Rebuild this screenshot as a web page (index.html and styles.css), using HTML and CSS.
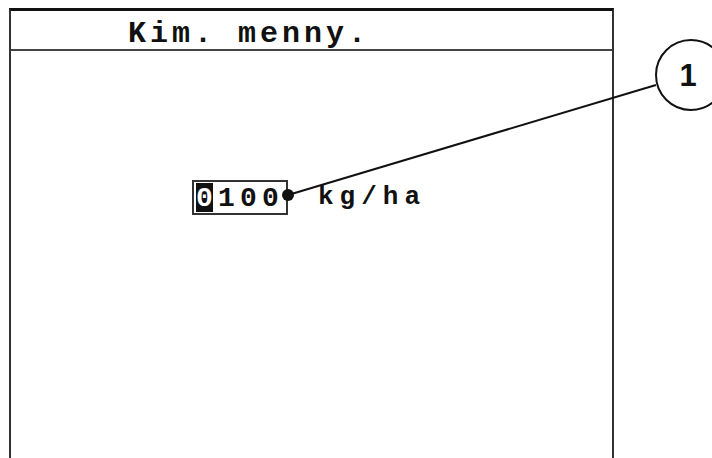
FILE: index.html
```html
<!DOCTYPE html>
<html lang="en">
<head>
  <meta charset="UTF-8">
  <meta name="viewport" content="width=device-width, initial-scale=1.0">
  <title>Kim. menny.</title>
  <link rel="stylesheet" href="styles.css">
</head>
<body>
  <div class="screen">
    <div class="title">Kim. menny.</div>
    <div class="content">
      <div class="entry">
        <div class="field">
          <span class="digit cursor">0</span>
          <span class="digit">1</span>
          <span class="digit">0</span>
          <span class="digit">0</span>
        </div>
        <span class="unit">kg/ha</span>
      </div>
    </div>
  </div>

  <!-- callout 1 -->
  <svg class="callout" width="712" height="458" viewBox="0 0 712 458">
    <line x1="288" y1="195" x2="656" y2="85" stroke="#111" stroke-width="2"/>
    <circle cx="288" cy="195" r="6" fill="#111"/>
    <circle cx="691" cy="75" r="35" fill="#fff" stroke="#111" stroke-width="2"/>
    <text x="688" y="86" text-anchor="middle" class="callout-num">1</text>
  </svg>
</body>
</html>
```

FILE: styles.css
```css
* {
  box-sizing: border-box;
}
body {
  margin: 0;
  background: #fff;
  width: 712px;
  height: 458px;
  overflow: hidden;
  position: relative;
  font-family: 'Liberation Mono', 'Courier New', monospace;
  font-weight: bold;
  color: #111;
}
.screen {
  margin: 8px 0 0 9px;
  width: 605px;
  height: 450px;
  border-top: 3px solid #111;
  border-left: 2px solid #333;
  border-right: 2px solid #333;
  display: flex;
  flex-direction: column;
}
.title {
  height: 40px;
  padding: 8px 0 0 117px;
  font-size: 30px;
  line-height: 30px;
  letter-spacing: 4px;
  border-bottom: 2px solid #444;
}
.content {
  flex: 1;
  padding: 129px 0 0 181px;
}
.entry {
  display: flex;
  align-items: flex-start;
  gap: 30px;
}
.field {
  display: flex;
  align-items: flex-start;
  width: 96px;
  height: 35px;
  padding: 1px 0 0 2px;
  border: 2px solid #333;
}
.digit {
  width: 22px;
  font-size: 28px;
  line-height: 29px;
  padding-top: 1px;
  text-align: left;
}
.cursor {
  width: 17px;
  height: 29px;
  margin-right: 5px;
  background: #111;
  color: #fff;
  text-align: center;
}
.unit {
  margin-top: 4px;
  font-size: 26px;
  line-height: 26px;
  letter-spacing: 6px;
}
.callout {
  position: absolute;
  top: 0;
  left: 0;
  pointer-events: none;
}
.callout-num {
  font-family: 'Liberation Sans', Arial, sans-serif;
  font-weight: bold;
  font-size: 31px;
  fill: #111;
}
```
